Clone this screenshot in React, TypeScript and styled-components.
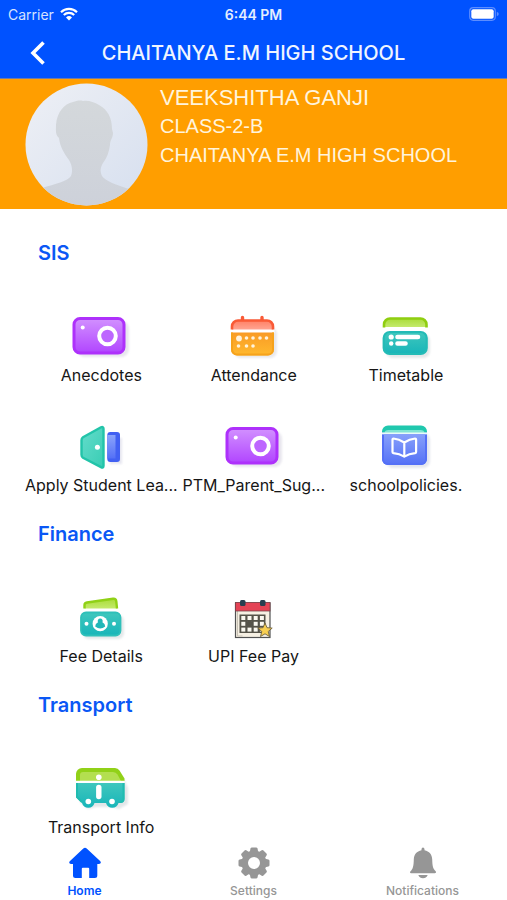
import React from "react";
import styled, { createGlobalStyle } from "styled-components";

const GlobalStyle = createGlobalStyle`
  * { box-sizing: border-box; }
  body { margin: 0; background: #fff; font-family: Inter, "Noto Sans", sans-serif; color: #161616; }
  button { font: inherit; border: 0; background: none; padding: 0; cursor: pointer; }
  h1, h2, p, ul { margin: 0; padding: 0; }
`;

const Screen = styled.div`
  height: 100vh;
  display: flex;
  flex-direction: column;
  background: #fff;
`;

const TopBar = styled.header`
  flex: none;
  background: #0052ff;
  color: #fff;
  border-bottom: 1px solid #6d7aa8;
`;

const StatusBar = styled.div`
  display: grid;
  grid-template-columns: 1fr auto 1fr;
  align-items: center;
  height: 28px;
  padding: 0 8px;
  font-size: 14px;
`;

const Carrier = styled.span`
  display: flex;
  align-items: center;
  gap: 6px;
  color: #d5e2ff;
`;

const Clock = styled.span`
  font-weight: 600;
  color: #e4edff;
`;

const BatterySlot = styled.span`
  display: flex;
  justify-content: flex-end;
`;

const TitleRow = styled.div`
  display: grid;
  grid-template-columns: 76px 1fr 76px;
  align-items: center;
  height: 50px;
`;

const BackButton = styled.button`
  display: flex;
  align-items: center;
  justify-content: center;
  height: 44px;
  color: #fff;
`;

const Title = styled.h1`
  font-size: 20px;
  line-height: 28px;
  font-weight: 500;
  text-align: center;
  white-space: nowrap;
  color: #f0f5ff;
`;

const Profile = styled.section`
  flex: none;
  display: flex;
  gap: 12px;
  padding: 4px 25px 3px;
  background: #ff9e00;
  color: #fff4dc;
  font-family: "Liberation Sans", Arial, sans-serif;
`;

const Student = styled.div`
  font-size: 20px;
  line-height: 29px;
  white-space: nowrap;
`;

const StudentName = styled.p`
  font-size: 22px;
`;

const Content = styled.main`
  flex: 1;
  min-height: 0;
  overflow: hidden;
  padding-top: 16px;
`;

const SectionTitle = styled.h2`
  padding: 14px 38px 19px;
  font-size: 20px;
  line-height: 28px;
  font-weight: 600;
  color: #0a57f5;
`;

const Grid = styled.ul`
  display: grid;
  grid-template-columns: repeat(3, 1fr);
  padding: 0 25px;
  list-style: none;
`;

const Tile = styled.button`
  display: flex;
  flex-direction: column;
  align-items: center;
  gap: 5px;
  width: 100%;
  height: 110px;
  padding-top: 28px;
  font-size: 16px;
  line-height: 20px;
  color: #161616;
  white-space: nowrap;
`;

const Tabs = styled.nav`
  flex: none;
  display: grid;
  grid-template-columns: repeat(3, 1fr);
  height: 60px;
  background: #fff;
`;

const Tab = styled.button<{ $active?: boolean }>`
  display: flex;
  flex-direction: column;
  align-items: center;
  gap: 4px;
  padding-top: 7px;
  font-size: 12px;
  line-height: 16px;
  font-weight: ${(p) => (p.$active ? 600 : 500)};
  color: ${(p) => (p.$active ? "#0052ff" : "#969696")};
`;

const Art = ({ children }: { children: React.ReactNode }) => (
  <svg width="60" height="46" viewBox="0 0 60 46" aria-hidden="true">
    <defs>
      <filter id="soft" x="-20%" y="-20%" width="140%" height="140%">
        <feGaussianBlur stdDeviation="1" />
      </filter>
      <linearGradient id="purple" x1="0" y1="0" x2="0" y2="1"><stop offset="0" stopColor="#d291ff" /><stop offset="1" stopColor="#b145ff" /></linearGradient>
      <linearGradient id="orange" x1="0" y1="0" x2="0" y2="1"><stop offset="0" stopColor="#f99b26" /><stop offset="1" stopColor="#ffb92e" /></linearGradient>
      <linearGradient id="red" x1="0" y1="0" x2="0" y2="1"><stop offset="0" stopColor="#ff8065" /><stop offset="1" stopColor="#ffa491" /></linearGradient>
      <linearGradient id="teal" x1="0" y1="0" x2="0" y2="1"><stop offset="0" stopColor="#3fc7bd" /><stop offset="1" stopColor="#18b5b9" /></linearGradient>
      <linearGradient id="lime" x1="0" y1="0" x2="0" y2="1"><stop offset="0" stopColor="#a9dc38" /><stop offset="1" stopColor="#c4ea6c" /></linearGradient>
      <linearGradient id="door" x1="0" y1="0" x2="1" y2="1"><stop offset="0" stopColor="#64dccb" /><stop offset="1" stopColor="#39cdb4" /></linearGradient>
      <linearGradient id="blue" x1="0" y1="0" x2="0" y2="1"><stop offset="0" stopColor="#8ba4fb" /><stop offset="1" stopColor="#5470f6" /></linearGradient>
    </defs>
    {children}
  </svg>
);

const Camera = () => (
  <Art>
    <rect x="6" y="7" width="52" height="36" rx="8" fill="#e8e6ee" filter="url(#soft)" />
    <rect x="3" y="4.5" width="50" height="34.5" rx="6" fill="url(#purple)" stroke="#ae31fb" strokeWidth="3" />
    <circle cx="36.5" cy="22" r="8.3" fill="#bd66ff" stroke="#fff" strokeWidth="4" />
    <circle cx="11.7" cy="13.5" r="2" fill="#fff" />
  </Art>
);

const Attendance = () => (
  <Art>
    <rect x="10" y="13" width="43" height="31" rx="7" fill="#e8e8ec" filter="url(#soft)" />
    <path d="M6.5 15h44v4h-44z" fill="#fff" />
    <path d="M18.5 3.5v4M38 3.5v4" stroke="#f95a36" strokeWidth="3.4" strokeLinecap="round" />
    <path d="M8 15.5v-3a6 6 0 0 1 6-6h29a6 6 0 0 1 6 6v3z" fill="url(#red)" />
    <path d="M8 15.5v-3a6 6 0 0 1 6-6h29a6 6 0 0 1 6 6v3" fill="none" stroke="#f95a36" strokeWidth="2.6" />
    <path d="M7 18.5h43v17a6 6 0 0 1-6 6H13a6 6 0 0 1-6-6z" fill="url(#orange)" />
    <path d="M8 18.5v17a5 5 0 0 0 5 5h31a5 5 0 0 0 5-5v-17" fill="none" stroke="#f6a21c" strokeWidth="2" />
    <g fill="#fff3dc">
      <circle cx="15" cy="24.500" r="2.900" />
      <circle cx="22.5" cy="24" r="1.8" /><circle cx="29" cy="24" r="1.8" /><circle cx="36" cy="24" r="1.8" /><circle cx="42.5" cy="24" r="1.8" />
      <circle cx="14.5" cy="32" r="1.8" /><circle cx="22.5" cy="32" r="1.8" /><circle cx="29" cy="32" r="1.8" />
    </g>
  </Art>
);

const Timetable = () => (
  <Art>
    <rect x="10" y="20" width="44" height="24" rx="7" fill="#e4e8e9" filter="url(#soft)" />
    <path d="M8 13v-2.500a6 6 0 0 1 6-6h30.500a6 6 0 0 1 6 6V13z" fill="url(#lime)" />
    <path d="M8 13.500v-3a6 6 0 0 1 6-6h30.500a6 6 0 0 1 6 6v3" fill="none" stroke="#8fce10" strokeWidth="2.6" />
    <rect x="7.7" y="18" width="43" height="22" rx="6" fill="url(#teal)" stroke="#23bbb6" strokeWidth="2.2" />
    <path d="M21.5 23h20.5M21.5 29.5h8" stroke="#fff" strokeWidth="4.6" strokeLinecap="round" />
    <g fill="#fff"><circle cx="15.2" cy="23" r="2.6" /><circle cx="15.2" cy="29.5" r="2.2" /></g>
  </Art>
);

const Door = () => (
  <Art>
    <path d="M39 14h12v26H39z" fill="#e6e6f0" filter="url(#soft)" />
    <rect x="36.3" y="8" width="12.7" height="30" rx="3" fill="#4160f2" />
    <path d="M36.3 11h8.2v23.5h-8.2z" fill="url(#blue)" />
    <path d="M12 13.300 30 3.300q2.500-1 2.500 1.500v37q0 2.500-2.500 1.300L12 33.800q-1.500-1-1.500-3V16.300q0-2 1.500-3z" fill="url(#door)" stroke="#22c4a9" strokeWidth="2.4" strokeLinejoin="round" />
    <circle cx="26.4" cy="23.3" r="2.5" fill="#fff" />
  </Art>
);

const Policies = () => (
  <Art>
    <rect x="10" y="9" width="44" height="35" rx="7" fill="#e4e6ee" filter="url(#soft)" />
    <path d="M6 8h45v27a6 6 0 0 1-6 6H12a6 6 0 0 1-6-6z" fill="url(#blue)" />
    <path d="M7 11v24a5 5 0 0 0 5 5h33a5 5 0 0 0 5-5V11" fill="none" stroke="#5470f6" strokeWidth="2" />
    <path d="M6 8.500v-1a6 6 0 0 1 6-6h33a6 6 0 0 1 6 6v1z" fill="#20c8ae" />
    <path d="M8.500 9q0-3 4-3h32q4 0 4 3z" fill="#82e5d4" />
    <path d="M6 8.500h45v1.500H6z" fill="#e9fbf8" />
    <path d="M28.300 18.500Q23 15 17.500 14.500q-1 0-1 1V28q0 1 1 1.200 6 .4 10.800 3.500 4.800-3.100 10.800-3.500 1-.2 1-1.200V15.500q0-1-1-1-5.500.5-10.800 4zV32" fill="none" stroke="#fff" strokeWidth="2.2" strokeLinejoin="round" />
  </Art>
);

const Fee = () => (
  <Art>
    <rect x="12" y="20" width="41" height="24" rx="6" fill="#e4e8e9" filter="url(#soft)" />
    <path d="M13.500 13.500V10q0-2 2.500-2.500L42 3.800q3-.3 3.300 2.500l.7 7.200z" fill="url(#lime)" />
    <path d="M13.500 13.500V10q0-2 2.500-2.500L42 3.800q3-.3 3.300 2.500l.7 7.200" fill="none" stroke="#90d116" strokeWidth="2.4" />
    <rect x="10" y="17.5" width="39.5" height="23" rx="5" fill="url(#teal)" stroke="#2fc0b9" strokeWidth="1.8" />
    <circle cx="29.2" cy="28.7" r="7.6" fill="#fff" />
    <path d="M29.200 23.500a2.500 2.500 0 0 1 2.200 3.700q2.800 1.600 2.800 4.300-4.900 4-10 0 0-2.700 2.800-4.300a2.500 2.500 0 0 1 2.200-3.700z" fill="#20b7b8" />
    <g fill="#fff"><circle cx="15.5" cy="28.7" r="2" /><circle cx="43" cy="28.7" r="2" /></g>
  </Art>
);

const Upi = () => (
  <Art>
    <rect x="12.500" y="8" width="34.500" height="34.500" fill="#f6f0e3" stroke="#515253" strokeWidth="1.200" />
    <path d="M14.500 16v25h5" fill="none" stroke="#c9c3b6" strokeWidth="1" />
    <rect x="12.500" y="7.500" width="34.500" height="8.500" fill="#e44355" stroke="#7c4149" strokeWidth=".8" />
    <g fill="#283e50"><rect x="17" y="5" width="5.500" height="6" rx="1.500" /><rect x="37" y="5" width="5.500" height="6" rx="1.500" /></g>
    <path d="M16.500 19.500h26V38h-26z" fill="#555349" />
    <g fill="#faf8f0">
      {[0, 1, 2].map((r) => [0, 1, 2, 3].map((c) => <rect key={`${r}${c}`} x={18.3 + c * 6.2} y={21 + r * 5.8} width="4" height="4" />))}
    </g>
    <circle cx="26.500" cy="28.800" r="3" fill="#555349" />
    <path d="m42 28 2 4.700 5.200.4-4 3.400 1.300 5-4.500-2.700-4.500 2.700 1.300-5-4-3.400 5.200-.4z" fill="#f8cf51" stroke="#6e603c" strokeWidth=".9" strokeLinejoin="round" />
  </Art>
);

const Bus = () => (
  <Art>
    <path d="M9 12h43l5 10v16l-9 5-7-2H25l-8 2-8-7z" fill="#e2e6e8" filter="url(#soft)" />
    <path d="M5 17h48.500v16a4 4 0 0 1-4 4H47.500a6.500 6.500 0 0 1-12.500 0H23.500a6.500 6.500 0 0 1-12.500 0L5 31z" fill="url(#teal)" />
    <path d="M6 17v14l5 5M52.500 17v16q0 3-4 3" fill="none" stroke="#20bcb0" strokeWidth="2" />
    <path d="M5 15V8a6 6 0 0 1 6-6h33q3 0 4.500 2.500l5 8V15z" fill="#91d118" />
    <path d="M9 15V9q0-3 3-3h30q3 0 4.500 2.500L50 15z" fill="#b3df50" />
    <path d="M5 14.700h48.500v2.300H5z" fill="#fff" />
    <circle cx="27.8" cy="11.300" r="2.8" fill="#fff" />
    <path d="M27.800 21.500v9" stroke="#fff" strokeWidth="5.400" strokeLinecap="round" />
    <g fill="#fff"><circle cx="17.300" cy="35.500" r="2.800" /><circle cx="41" cy="35.500" r="2.800" /></g>
  </Art>
);

const Avatar = () => (
  <svg width="123" height="123" viewBox="0 0 123 123" role="img" aria-label="Student photo">
    <defs>
      <clipPath id="disc"><circle cx="61.500" cy="61.500" r="61" /></clipPath>
      <linearGradient id="sky" x1="0" y1="0" x2="1" y2="1"><stop offset="0" stopColor="#eef0f5" /><stop offset="1" stopColor="#d6dfef" /></linearGradient>
      <linearGradient id="shade" x1="0" y1="0" x2="0" y2="1"><stop offset="0" stopColor="#d4d8db" /><stop offset="1" stopColor="#cdd1da" /></linearGradient>
    </defs>
    <g clipPath="url(#disc)">
      <path d="M0 0h123v123H0z" fill="url(#sky)" />
      <path d="M58 18c5-1 11 1 16 4 9 5 13 13 13 24l1 4c0 5-3 7-3 12-1 7-3 13-7 18-3 5-3 9-1 13 3 5 15 9 27 13l12 20H5l12-21c13-4 26-7 29-12 2-5 1-11-2-16-5-7-9-13-10-22-4-3-3-9-3-13 1-13 8-21 17-23 3-1 7-2 10-1z" fill="url(#shade)" />
    </g>
  </svg>
);

const Wifi = () => (
  <svg width="18" height="14" viewBox="0 0 18 14" aria-hidden="true">
    <path d="M1 5.200a11.500 11.500 0 0 1 16 0M3.800 8a7.500 7.500 0 0 1 10.400 0" fill="none" stroke="#fff" strokeWidth="2.200" />
    <path d="M9 13.500 6 10.500a4.300 4.300 0 0 1 6 0z" fill="#fff" />
  </svg>
);

const Battery = () => (
  <svg width="30" height="14" viewBox="0 0 30 14" aria-hidden="true">
    <rect x=".7" y=".7" width="25.600" height="12.600" rx="3.500" fill="none" stroke="#5c8dff" strokeWidth="1.200" />
    <rect x="2.300" y="2.300" width="22.400" height="9.400" rx="2" fill="#fff" />
    <path d="M27.800 4.700q2 .8 2 2.300t-2 2.300z" fill="#5c8dff" />
  </svg>
);

const Home = () => (
  <svg width="32" height="32" viewBox="0 0 32 32" fill="currentColor" aria-hidden="true">
    <path d="M14.300 1.400q1.700-1.300 3.400 0l13.400 12.700q1.200 1.300.4 2.200-.5.700-1.700.7H28.300v11.500q0 2.500-2.500 2.500h-5.600V21.800q0-1-1-1h-5.400q-1 0-1 1V31H6.500Q4 31 4 28.500V17H2.200q-1.300 0-1.700-.8-.7-1 .5-2.100z" />
  </svg>
);

const Gear = () => (
  <svg width="32" height="32" viewBox="-16 -16 32 32" fill="currentColor" aria-hidden="true">
    <path fillRule="evenodd" d="M0-12.500a12.500 12.500 0 0 1 0 25 12.500 12.500 0 0 1 0-25zM0-6a6 6 0 0 0 0 12A6 6 0 0 0 0-6z" />
    {[0, 45, 90, 135, 180, 225, 270, 315].map((a) => (
      <path key={a} transform={`rotate(${a})`} d="M-4.500-10l1-4.400q.3-1.100 1.400-1.100h4.200q1.100 0 1.400 1.100l1 4.400z" />
    ))}
  </svg>
);

const Bell = () => (
  <svg width="32" height="32" viewBox="0 0 32 32" fill="currentColor" aria-hidden="true">
    <path d="M16 .6q1.400 0 1.500 1.600v1.100c4.800.9 7.500 4.400 7.700 9 .2 7 .8 9.600 3.500 12 .7 1 .2 2-1 2H4.300q-1.700 0-1.200-1.600c3-2.600 3.500-5.400 3.700-12.400.2-4.600 2.900-8.100 7.700-9V2.200Q14.600.6 16 .6zM11.300 28h9.400q-1.400 3.300-4.700 3.300T11.300 28z" />
  </svg>
);

const sections = [
  {
    title: "SIS",
    items: [
      { label: "Anecdotes", Icon: Camera },
      { label: "Attendance", Icon: Attendance },
      { label: "Timetable", Icon: Timetable },
      { label: "Apply Student Lea...", Icon: Door },
      { label: "PTM_Parent_Sug...", Icon: Camera },
      { label: "schoolpolicies.", Icon: Policies },
    ],
  },
  { title: "Finance", items: [{ label: "Fee Details", Icon: Fee }, { label: "UPI Fee Pay", Icon: Upi }] },
  { title: "Transport", items: [{ label: "Transport Info", Icon: Bus }] },
];

export default function App() {
  return (
    <Screen>
      <GlobalStyle />
      <TopBar>
        <StatusBar>
          <Carrier>Carrier <Wifi /></Carrier>
          <Clock>6:44 PM</Clock>
          <BatterySlot><Battery /></BatterySlot>
        </StatusBar>
        <TitleRow>
          <BackButton aria-label="Back">
            <svg width="18" height="26" viewBox="0 0 18 26" aria-hidden="true">
              <path d="M14.500 2.500 4 13l10.500 10.500" fill="none" stroke="currentColor" strokeWidth="3.600" />
            </svg>
          </BackButton>
          <Title>CHAITANYA E.M HIGH SCHOOL</Title>
        </TitleRow>
      </TopBar>
      <Profile>
        <Avatar />
        <Student>
          <StudentName>VEEKSHITHA GANJI</StudentName>
          <p>CLASS-2-B</p>
          <p>CHAITANYA E.M HIGH SCHOOL</p>
        </Student>
      </Profile>
      <Content>
        {sections.map(({ title, items }) => (
          <section key={title}>
            <SectionTitle>{title}</SectionTitle>
            <Grid>
              {items.map(({ label, Icon }) => (
                <li key={label}>
                  <Tile><Icon />{label}</Tile>
                </li>
              ))}
            </Grid>
          </section>
        ))}
      </Content>
      <Tabs>
        <Tab $active aria-current="page"><Home />Home</Tab>
        <Tab><Gear />Settings</Tab>
        <Tab><Bell />Notifications</Tab>
      </Tabs>
    </Screen>
  );
}
